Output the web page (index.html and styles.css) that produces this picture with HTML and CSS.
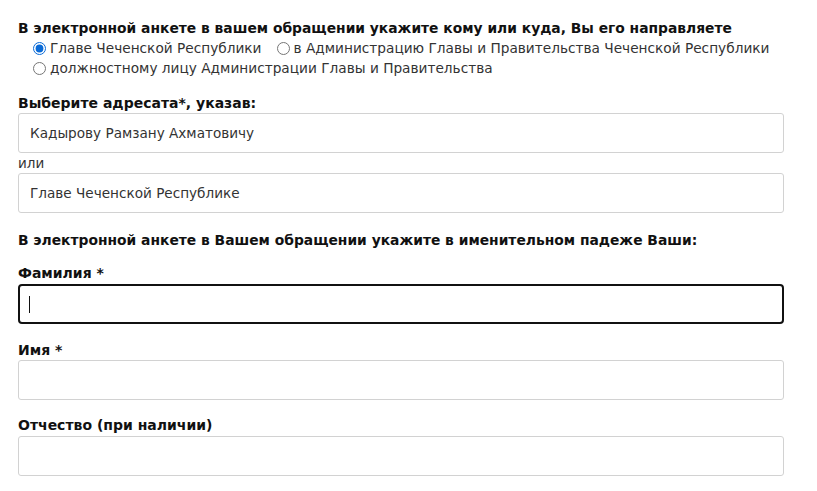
FILE: index.html
```html
<!DOCTYPE html>
<html lang="ru">
<head>
<meta charset="utf-8">
<link rel="stylesheet" href="styles.css">
</head>
<body>
<form class="form">
  <div class="title">В электронной анкете в вашем обращении укажите кому или куда, Вы его направляете</div>
  <div class="radios">
    <label class="opt"><input type="radio" name="to" checked><span>Главе Чеченской Республики</span></label>
    <label class="opt"><input type="radio" name="to"><span>в Администрацию Главы и Правительства Чеченской Республики</span></label>
    <label class="opt"><input type="radio" name="to"><span>должностному лицу Администрации Главы и Правительства</span></label>
  </div>
  <div class="label lbl-addr">Выберите адресата*, указав:</div>
  <div class="field">Кадырову Рамзану Ахматовичу</div>
  <div class="or">или</div>
  <div class="field">Главе Чеченской Республике</div>
  <div class="title title2">В электронной анкете в Вашем обращении укажите в именительном падеже Ваши:</div>
  <div class="label lbl-first">Фамилия *</div>
  <div class="field focus"><span class="caret"></span></div>
  <div class="label lbl-next">Имя *</div>
  <div class="field"></div>
  <div class="label lbl-next2">Отчество (при наличии)</div>
  <div class="field"></div>
</form>
</body>
</html>
```
FILE: styles.css
```css
html, body {
  margin: 0;
  padding: 0;
  background: #fff;
}
body {
  font-family: "DejaVu Sans", Verdana, sans-serif;
  font-size: 13px;
  color: #222;
}
.form {
  width: 766px;
  padding: 18px 0 0 18px;
  display: flex;
  flex-direction: column;
}
.title {
  font-weight: bold;
  font-size: 13.85px;
  line-height: 20px;
  color: #111;
}
.radios {
  display: flex;
  flex-wrap: wrap;
  padding-left: 15px;
  width: 770px;
}
.opt {
  display: flex;
  align-items: center;
  height: 20px;
  line-height: 20px;
  margin-right: 15px;
  color: #333;
  font-size: 13.7px;
}
.opt input {
  margin: 0 4px 0 0;
  width: 13px;
  height: 13px;
  accent-color: #0a6ad6;
}
.label {
  font-weight: bold;
  font-size: 14px;
  line-height: 20px;
  color: #111;
}
.lbl-addr { margin-top: 15px; }
.field {
  box-sizing: border-box;
  height: 40px;
  border: 1px solid #d2d2d2;
  border-radius: 3px;
  padding: 0 11px;
  display: flex;
  align-items: center;
  color: #333;
  font-size: 13.6px;
}
.or {
  line-height: 20px;
  color: #333;
  font-size: 13.5px;
}
.title2 { margin-top: 17px; font-size: 13.85px; }
.lbl-first { margin-top: 13px; margin-bottom: 1px; }
.lbl-next { margin-top: 16px; }
.lbl-next2 { margin-top: 15px; margin-bottom: 1px; }
.focus {
  border: 2px solid #111;
  border-radius: 4px;
  padding-left: 9px;
}
.caret {
  display: block;
  width: 1px;
  height: 17px;
  background: #111;
}
```
